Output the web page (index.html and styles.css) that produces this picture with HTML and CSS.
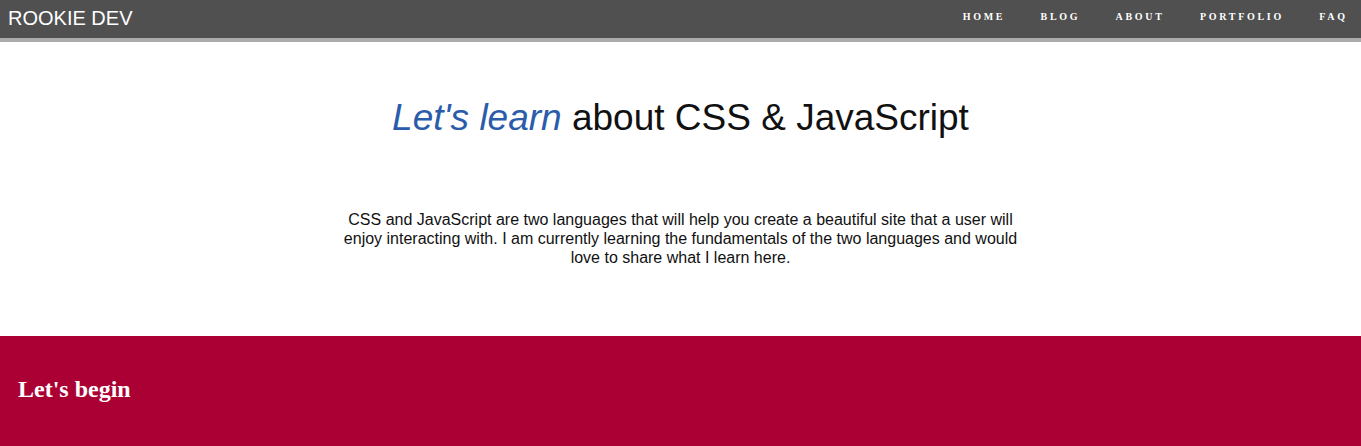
FILE: index.html
```html
<!DOCTYPE html>
<html>
<head>
<meta charset="utf-8">
<title>Rookie Dev</title>
<link rel="stylesheet" href="styles.css">
</head>
<body>
<header class="topbar">
  <div class="brand">ROOKIE DEV</div>
  <nav class="nav">
    <a href="#">HOME</a>
    <a href="#">BLOG</a>
    <a href="#">ABOUT</a>
    <a href="#">PORTFOLIO</a>
    <a href="#">FAQ</a>
  </nav>
</header>
<main class="intro">
  <h1 class="title"><em>Let's learn</em> about CSS &amp; JavaScript</h1>
  <p class="lead">CSS and JavaScript are two languages that will help you create a beautiful site that a user will enjoy interacting with. I am currently learning the fundamentals of the two languages and would love to share what I learn here.</p>
</main>
<section class="begin">
  <h2>Let's begin</h2>
</section>
</body>
</html>
```

FILE: styles.css
```css
html, body {
  margin: 0;
  padding: 0;
  background: #ffffff;
}
body {
  font-family: "Liberation Sans", Arial, sans-serif;
  color: #111;
}
.topbar {
  display: flex;
  align-items: center;
  justify-content: space-between;
  height: 38px;
  background: #505050;
  border-bottom: 4px solid #ababab;
  padding: 0 0 0 8px;
}
.brand {
  color: #fff;
  font-size: 20px;
  padding-bottom: 2px;
}
.nav {
  display: flex;
  gap: 38px;
  padding-right: 16px;
  padding-bottom: 6px;
}
.nav a {
  color: #fff;
  text-decoration: none;
  font-family: "Liberation Serif", "Times New Roman", serif;
  font-weight: bold;
  font-size: 10px;
  letter-spacing: 2.7px;
  margin-right: -2.7px;
}
.intro {
  padding: 55px 0 69px;
  text-align: center;
}
.title {
  margin: 0;
  font-size: 37px;
  font-weight: normal;
  color: #111;
}
.title em {
  color: #2a5caa;
}
.lead {
  width: 50%;
  margin: 71px auto 0;
  font-size: 16px;
  line-height: 19px;
}
.begin {
  background: #ab0033;
  padding: 40px 18px 44px;
  min-height: 40px;
}
.begin h2 {
  margin: 0;
  color: #fff;
  font-family: "Liberation Serif", "Times New Roman", serif;
  font-size: 24px;
  font-weight: bold;
}
```
